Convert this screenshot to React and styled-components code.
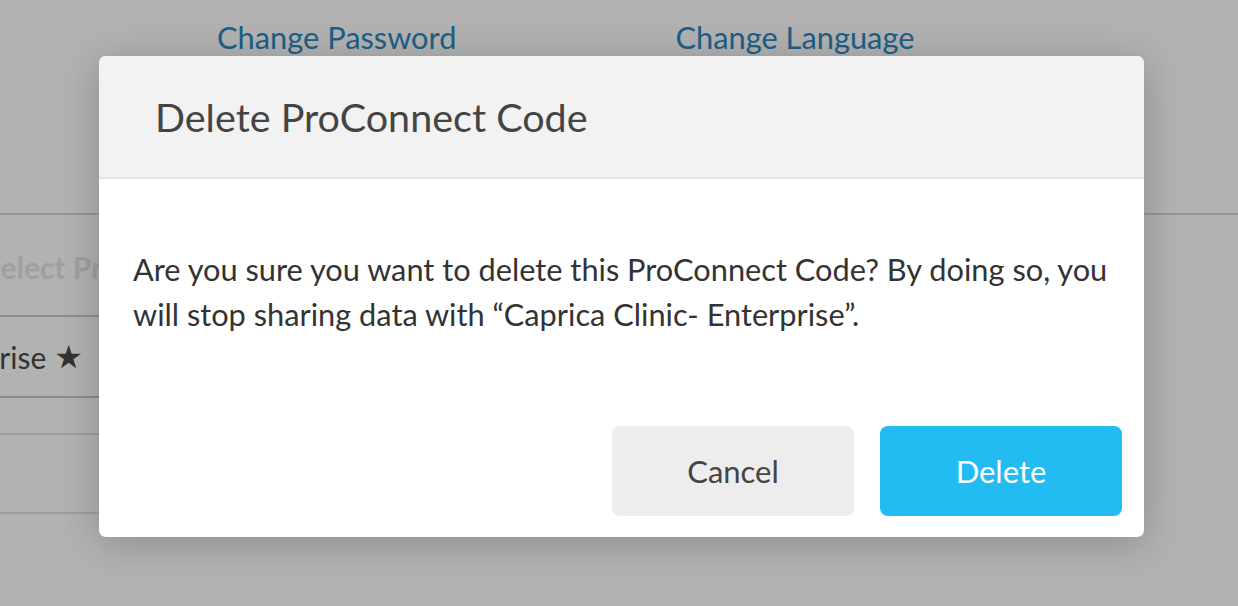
import styled, { createGlobalStyle } from 'styled-components';

const GlobalStyle = createGlobalStyle`
  html, body {
    margin: 0;
    padding: 0;
  }
  body {
    font-family: Lato, "Open Sans", "Liberation Sans", sans-serif;
    background: #ffffff;
  }
`;

const App = () => {
  return (
    <>
      <GlobalStyle />
      <Page>
        <TopLinks>
          <TopLink>Change Password</TopLink>
          <TopLink>Change Language</TopLink>
        </TopLinks>
        <Divider />
        <Table>
          <HeadRow>Select Primary</HeadRow>
          <Row>
            Caprica Clinic- Enterprise <Star>★</Star>
          </Row>
          <Row $light />
          <Row $light $tall />
        </Table>

        <Overlay>
          <Dialog>
            <DialogHeader>
              <DialogTitle>Delete ProConnect Code</DialogTitle>
            </DialogHeader>
            <DialogBody>
              <Message>
                Are you sure you want to delete this ProConnect Code? By doing so, you
                will stop sharing data with “Caprica Clinic- Enterprise”.
              </Message>
              <Actions>
                <Button>Cancel</Button>
                <Button $primary>Delete</Button>
              </Actions>
            </DialogBody>
          </Dialog>
        </Overlay>
      </Page>
    </>
  );
};

export default App;

const Page = styled.div`
  position: relative;
  width: 100%;
  height: 100vh;
  overflow: hidden;
  background: #ffffff;
`;

const TopLinks = styled.div`
  display: flex;
  padding: 15px 0 0 217px;
  height: 45px;
`;

const TopLink = styled.a`
  font-size: 30.8px;
  line-height: 45px;
  color: #2b89c2;
  cursor: pointer;

  & + & {
    margin-left: 219px;
  }
`;

const Divider = styled.div`
  margin-top: 153px;
  height: 2px;
  background: #d9d9d9;
`;

const Table = styled.div`
  width: 560px;
  margin-left: -16px;
`;

const HeadRow = styled.div`
  height: 102px;
  padding-top: 34px;
  box-sizing: border-box;
  font-size: 30px;
  font-weight: 700;
  color: #e6e6e6;
  border-bottom: 2px solid #cdcdcd;
  white-space: nowrap;
`;

const Row = styled.div`
  height: ${(p) => (p.$tall ? '79px' : p.$light ? '37px' : '81px')};
  display: flex;
  align-items: center;
  justify-content: flex-end;
  gap: 8px;
  padding-right: 461px;
  box-sizing: border-box;
  font-size: 30px;
  color: #4a4a4a;
  white-space: nowrap;
  border-bottom: 2px solid ${(p) => (p.$light ? '#e3e3e3' : '#c8c8c8')};
`;

const Star = styled.span`
  font-family: "DejaVu Sans", sans-serif;
  font-size: 32px;
  color: #4a4a4a;
`;

const Overlay = styled.div`
  position: absolute;
  inset: 0;
  background: rgba(0, 0, 0, 0.3);
  display: flex;
  align-items: flex-start;
  padding: 56px 0 0 99px;
  box-sizing: border-box;
`;

const Dialog = styled.div`
  width: 1045px;
  background: #ffffff;
  border-radius: 7px;
  overflow: hidden;
  box-shadow: 0 6px 40px rgba(0, 0, 0, 0.22);
`;

const DialogHeader = styled.div`
  height: 121px;
  display: flex;
  align-items: center;
  padding: 0 56px;
  background: #f2f2f2;
  border-bottom: 2px solid #e3e3e3;
`;

const DialogTitle = styled.h2`
  margin: 0;
  font-size: 39.5px;
  font-weight: 400;
  color: #444444;
`;

const DialogBody = styled.div`
  padding: 68px 22px 21px 34px;
`;

const Message = styled.p`
  margin: 0;
  font-size: 30.75px;
  line-height: 45px;
  color: #333333;
`;

const Actions = styled.div`
  display: flex;
  justify-content: flex-end;
  gap: 26px;
  margin-top: 89px;
`;

const Button = styled.button`
  width: 242px;
  height: 90px;
  border: none;
  border-radius: 8px;
  font-family: inherit;
  font-size: 31px;
  cursor: pointer;
  background: ${(p) => (p.$primary ? '#22bcf2' : '#ededed')};
  color: ${(p) => (p.$primary ? '#ffffff' : '#444444')};
`;
